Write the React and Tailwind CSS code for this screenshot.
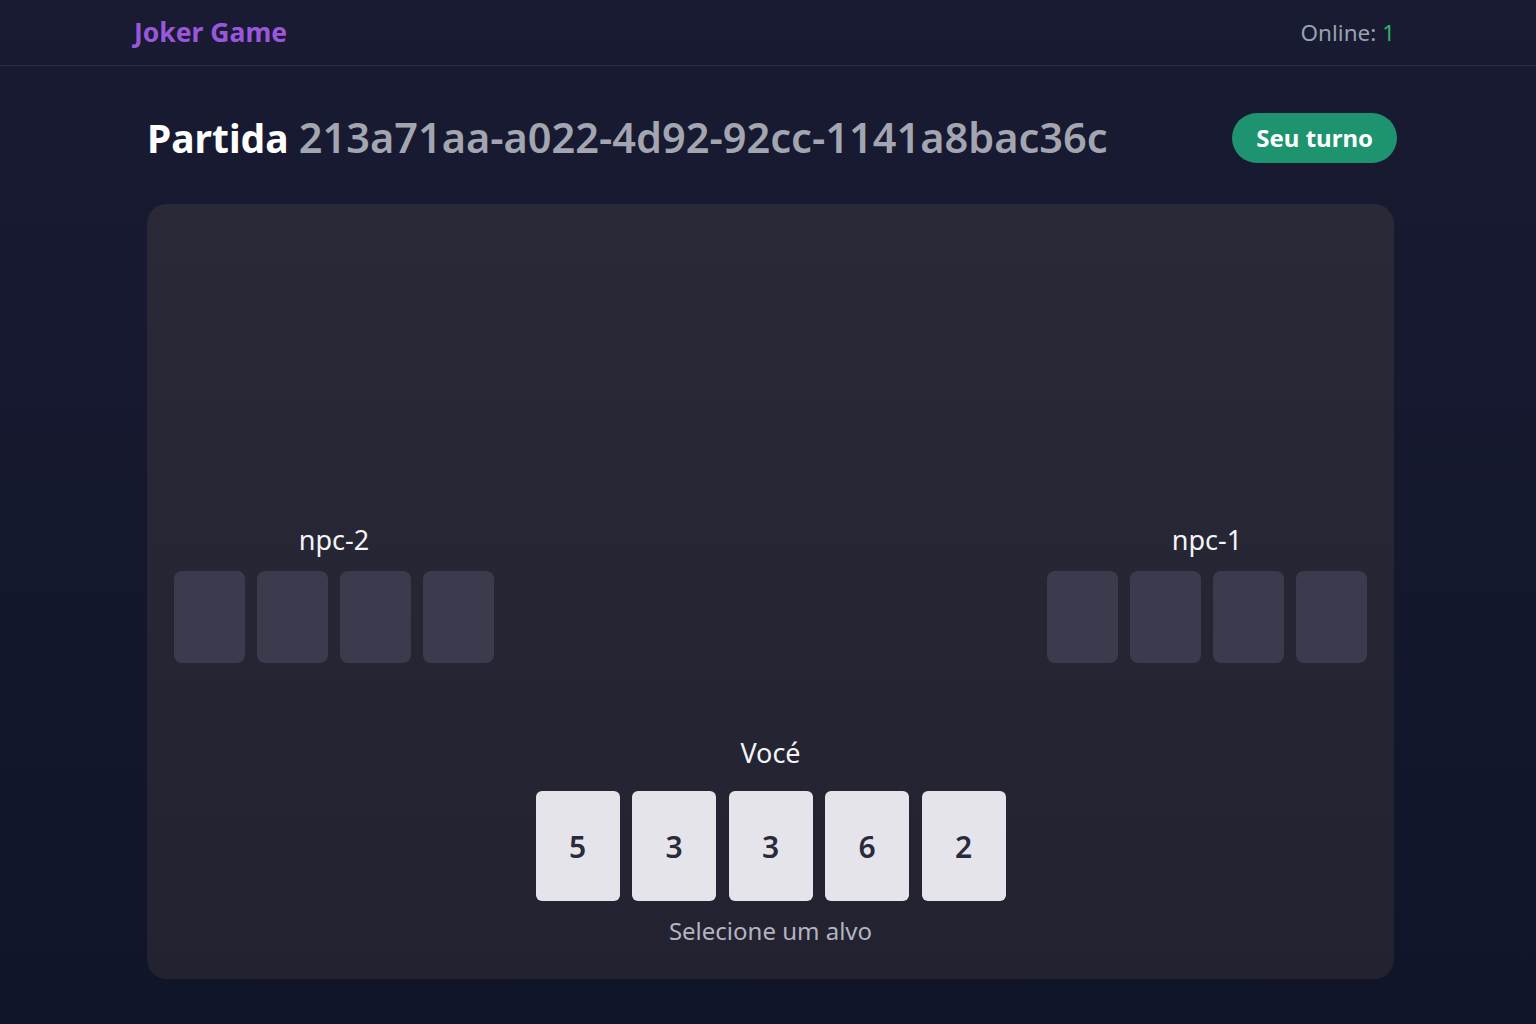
import React from 'react';

const opponents = [
  { name: 'npc-2', cards: 4 },
  { name: 'npc-1', cards: 4 },
];

const hand = [5, 3, 3, 6, 2];

const HiddenCard = () => (
  <div className="w-[71px] h-[92px] rounded-lg bg-[#3c3b4d]" />
);

const Opponent = ({ name, cards }) => (
  <div className="flex flex-col items-center">
    <span className="text-[27px] leading-9 text-gray-100">{name}</span>
    <div className="mt-[13px] flex gap-3">
      {Array.from({ length: cards }).map((_, i) => (
        <HiddenCard key={i} />
      ))}
    </div>
  </div>
);

const App = () => {
  return (
    <div
      className="min-h-screen bg-gradient-to-b from-[#181b31] to-[#11152a] text-white"
      style={{ fontFamily: '"Noto Sans", "Open Sans", sans-serif' }}
    >
      {/* Header */}
      <header className="h-[66px] border-b border-[#2a2d42] flex items-center justify-between pl-[134px] pr-[141px]">
        <span className="text-[26.5px] font-bold text-[#9b57db]">Joker Game</span>
        <span className="text-[22.5px] text-gray-400">
          Online: <span className="text-[#2eb36c]">1</span>
        </span>
      </header>

      <main className="pl-[147px] pr-[142px]">
        {/* Title */}
        <div className="flex items-center justify-between pt-[45px] pb-[40px]">
          <h1 className="text-[39px] leading-[52px] font-bold">
            Partida <span className="text-[41.5px] font-semibold text-[#a3a5b0]">213a71aa-a022-4d92-92cc-1141a8bac36c</span>
          </h1>
          <div className="-mr-[3px] h-[50px] px-6 rounded-full bg-[#1e9370] flex items-center text-[24px] font-bold">
            Seu turno
          </div>
        </div>

        {/* Table */}
        <div className="rounded-[20px] bg-gradient-to-b from-[#292938] to-[#222230] px-[27px] pt-[318px] pb-[32px] flex flex-col">
          <div className="flex justify-between">
            {opponents.map((o) => (
              <Opponent key={o.name} {...o} />
            ))}
          </div>

          <div className="mt-[72px] flex flex-col items-center">
            <span className="text-[27px] leading-9 text-gray-100">Vocé</span>
            <div className="mt-5 flex gap-[12.5px]">
              {hand.map((n, i) => (
                <div
                  key={i}
                  className="w-[84px] h-[110px] rounded-md bg-[#e4e4ea] flex items-center justify-center text-[30px] font-semibold text-[#2a2a3b]"
                >
                  {n}
                </div>
              ))}
            </div>
            <span className="mt-[14px] text-[24px] leading-8 text-[#b4b4c0]">Selecione um alvo</span>
          </div>
        </div>
      </main>
    </div>
  );
};

export default App;
